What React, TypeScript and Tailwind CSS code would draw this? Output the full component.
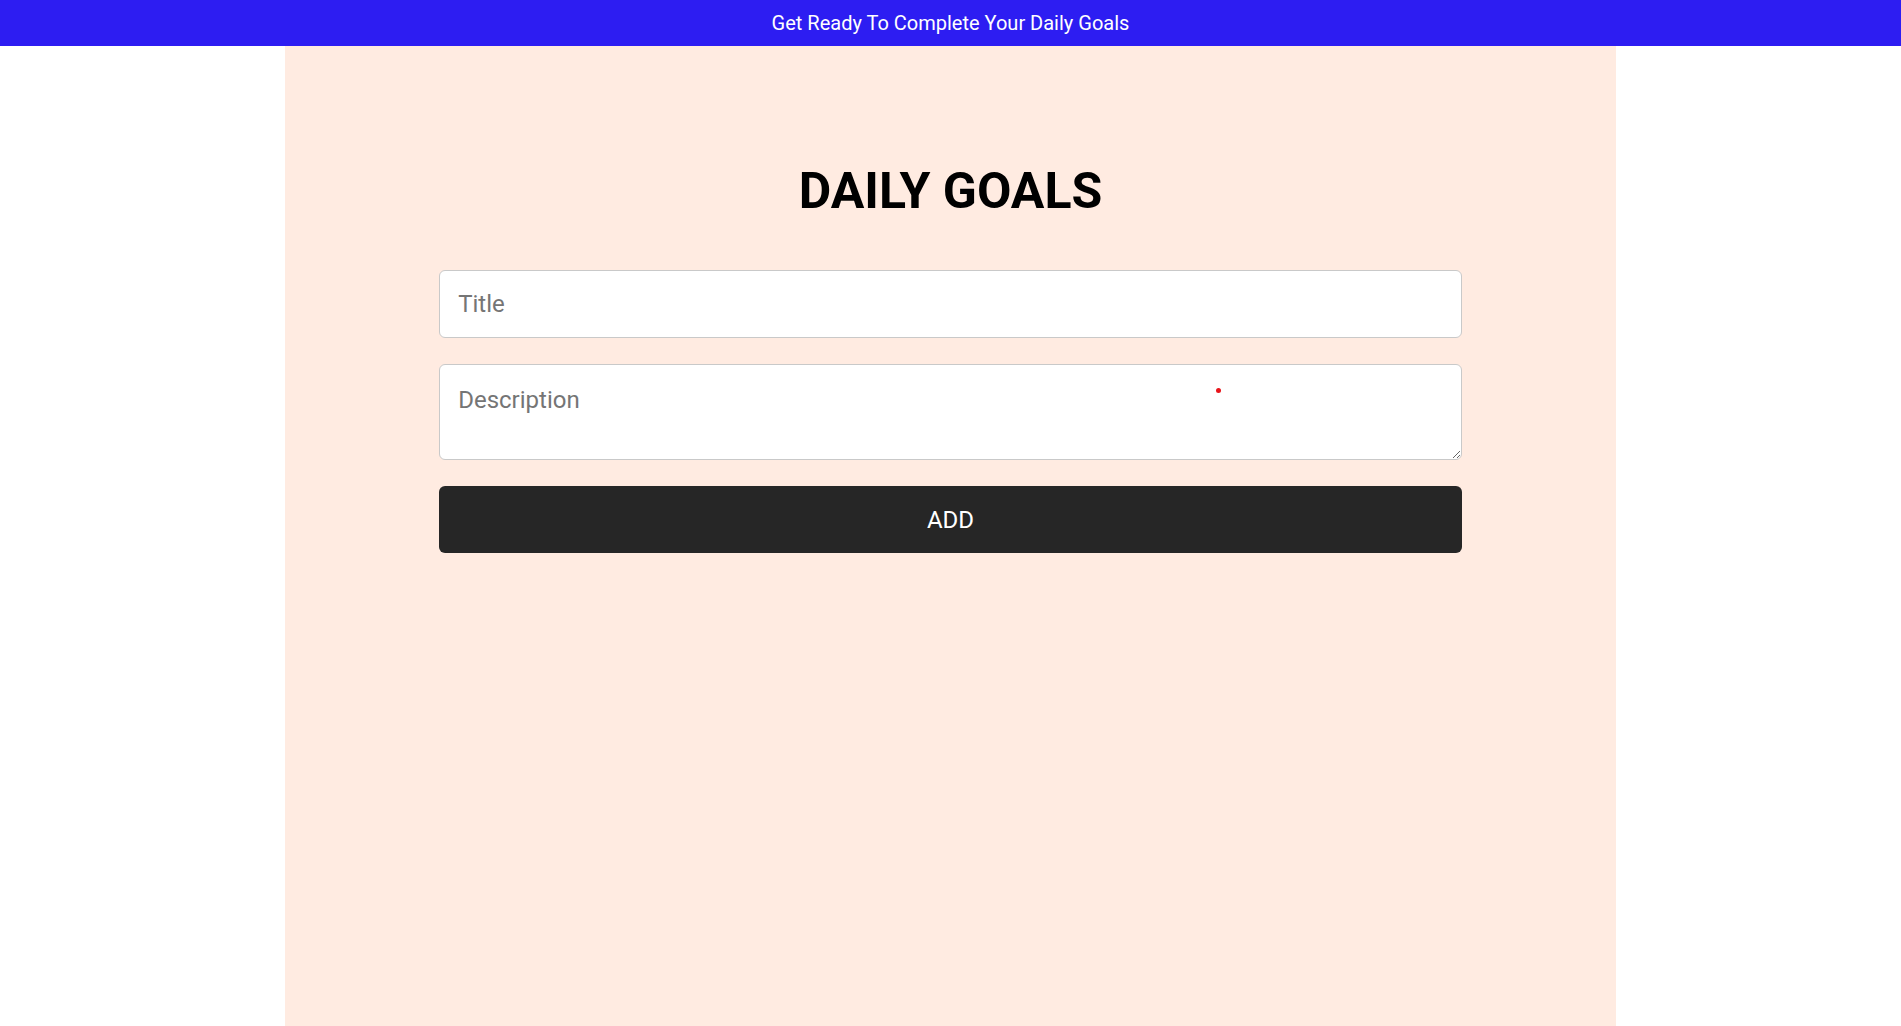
export default function App() {
  return (
    <div className="min-h-screen bg-white font-['Roboto',sans-serif]">
      {/* TOP BAR */}
      <div className="h-[46px] bg-[#2d1df2] flex items-center justify-center">
        <p className="text-white text-[20px]">Get Ready To Complete Your Daily Goals</p>
      </div>

      {/* PANEL */}
      <div className="relative w-[70%] mx-auto min-h-[980px] bg-[#ffebe1] px-[154px] pt-[108px]">
        <h1 className="text-center text-[50px] font-bold text-black mb-[41px]">DAILY GOALS</h1>

        <div className="flex flex-col gap-[26px]">
          <input
            type="text"
            placeholder="Title"
            className="h-[68px] w-full px-[18px] text-[24px] bg-white border border-[#c9c9c9] rounded-[6px] outline-none placeholder:text-[#757575]"
          />

          <textarea
            placeholder="Description"
            className="block h-[96px] w-full px-[18px] pt-[17px] text-[24px] bg-white border border-[#c9c9c9] rounded-[6px] outline-none placeholder:text-[#757575]"
          />

          <button className="h-[67px] w-full rounded-[6px] bg-[#262626] text-white text-[24px]">
            ADD
          </button>
        </div>

        {/* stray dot */}
        <div className="absolute left-[931px] top-[342px] w-[5px] h-[5px] rounded-full bg-[#e8141a]"></div>
      </div>
    </div>
  );
}
